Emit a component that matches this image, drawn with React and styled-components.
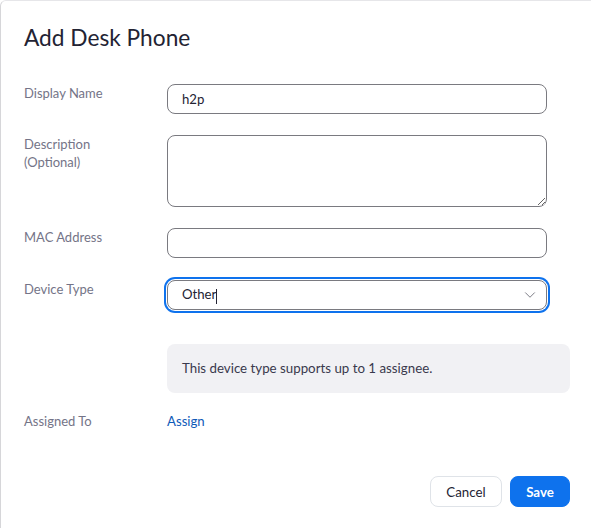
import styled, { createGlobalStyle } from 'styled-components';
import { ChevronDown } from 'lucide-react';

const GlobalStyle = createGlobalStyle`
    html, body {
        margin: 0;
        padding: 0;
        background: #ffffff;
    }
    body {
        font-family: Lato, "Open Sans", "Liberation Sans", sans-serif;
    }
`;

const Dialog = styled.div`
    box-sizing: border-box;
    width: 591px;
    height: 528px;
    background: #ffffff;
    border-left: 1px solid #d6d6d9;
    border-top: 1px solid #e6e6e9;
    border-top-left-radius: 6px;
    padding: 23px 21px 0 23px;
    display: flex;
    flex-direction: column;
`;

const Title = styled.h2`
    margin: 0 0 32px;
    font-size: 22.7px;
    line-height: 28px;
    font-weight: 400;
    color: #232333;
`;

const Row = styled.div`
    display: grid;
    grid-template-columns: 143px 1fr;
    align-items: start;
    margin-bottom: ${(p) => p.$gap ?? 21}px;
`;

const Label = styled.div`
    font-size: 13px;
    line-height: 18px;
    color: #747487;
`;

const Field = styled.div`
    box-sizing: border-box;
    width: 380px;
    height: 30px;
    border: 1px solid #7a7a80;
    border-radius: 8px;
    background: #ffffff;
    padding: 0 14px;
    display: flex;
    align-items: center;
    font-size: 13.2px;
    color: #232333;
`;

const TextArea = styled.textarea`
    box-sizing: border-box;
    width: 380px;
    height: 72px;
    border: 1px solid #7a7a80;
    border-radius: 8px;
    resize: vertical;
    outline: none;
    font-family: inherit;
    font-size: 13px;
    display: block;
    margin: 0;
`;

const Select = styled(Field)`
    justify-content: space-between;
    box-shadow: 0 0 0 1px #ffffff, 0 0 0 3px #0e72ed;
    padding-right: 7px;
`;

const Caret = styled.span`
    display: inline-block;
    width: 1px;
    height: 15px;
    background: #232333;
    vertical-align: middle;
    margin-left: 0;
`;

const Notice = styled.div`
    box-sizing: border-box;
    height: 49px;
    background: #f1f1f4;
    border-radius: 8px;
    padding: 0 15px 2px;
    display: flex;
    align-items: center;
    font-size: 13.3px;
    color: #39394d;
`;

const Link = styled.a`
    font-size: 13.2px;
    line-height: 18px;
    color: #0e5ab8;
    text-decoration: none;
    cursor: pointer;
`;

const Footer = styled.div`
    display: flex;
    justify-content: flex-end;
    gap: 8px;
    margin-top: 46px;
`;

const Button = styled.button`
    box-sizing: border-box;
    height: 31px;
    width: ${(p) => (p.$primary ? 60 : 72)}px;
    padding: 0;
    border-radius: 8px;
    font-family: inherit;
    font-size: 13.3px;
    font-weight: ${(p) => (p.$primary ? 700 : 400)};
    color: ${(p) => (p.$primary ? '#ffffff' : '#232333')};
    background: ${(p) => (p.$primary ? '#0e72ed' : '#ffffff')};
    border: 1px solid ${(p) => (p.$primary ? '#0e72ed' : '#dfe3e8')};
`;

export default function App() {
    return (
        <>
            <GlobalStyle />
            <Dialog>
                <Title>Add Desk Phone</Title>

                <Row>
                    <Label>Display Name</Label>
                    <Field>h2p</Field>
                </Row>

                <Row>
                    <Label>
                        Description
                        <br />
                        (Optional)
                    </Label>
                    <TextArea />
                </Row>

                <Row $gap={22}>
                    <Label>MAC Address</Label>
                    <Field />
                </Row>

                <Row $gap={34}>
                    <Label>Device Type</Label>
                    <Select>
                        <span>
                            Other
                            <Caret />
                        </span>
                        <ChevronDown size={18} strokeWidth={1.2} color="#6e6e78" />
                    </Select>
                </Row>

                <Row $gap={19}>
                    <div />
                    <Notice>This device type supports up to 1 assignee.</Notice>
                </Row>

                <Row $gap={0}>
                    <Label>Assigned To</Label>
                    <Link>Assign</Link>
                </Row>

                <Footer>
                    <Button>Cancel</Button>
                    <Button $primary>Save</Button>
                </Footer>
            </Dialog>
        </>
    );
}
